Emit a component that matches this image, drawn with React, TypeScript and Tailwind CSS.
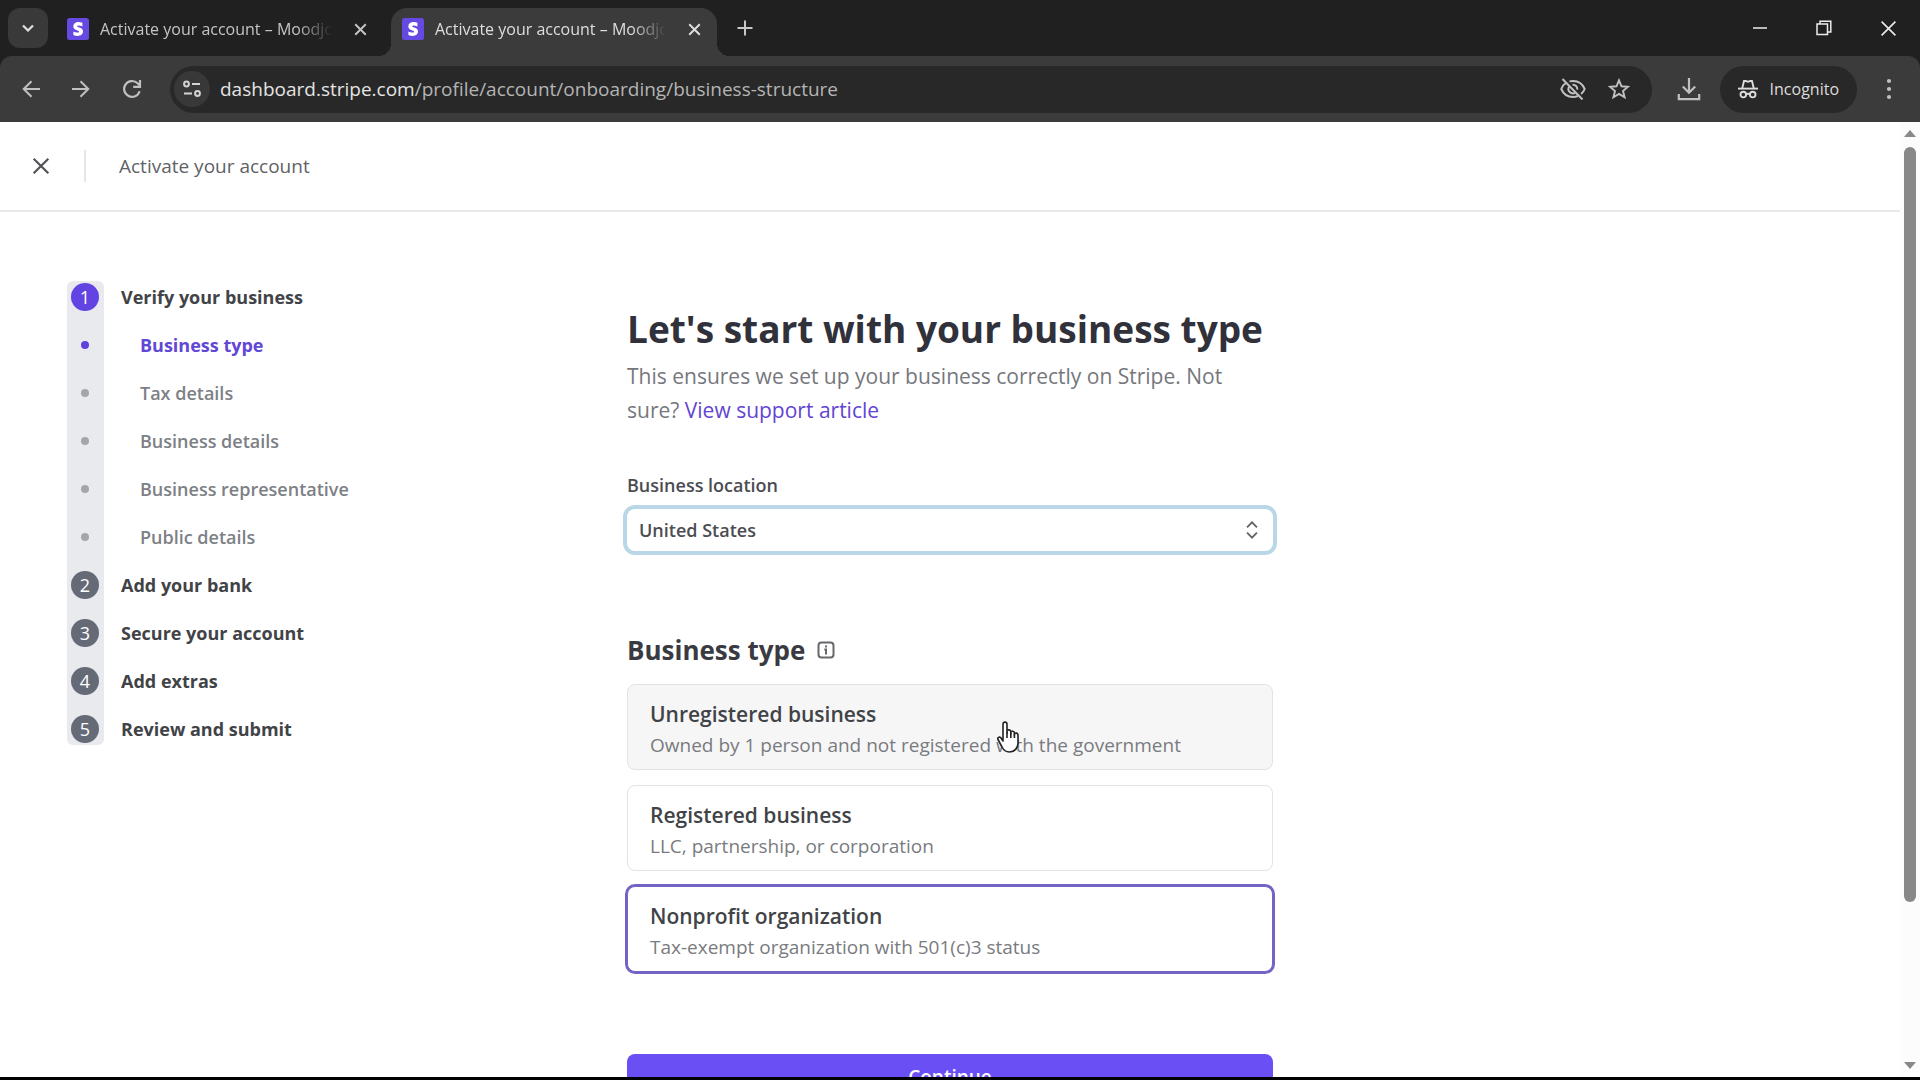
import React, { useState } from "react";

type Step = { label: string; number?: number; active?: boolean };

const steps: Step[] = [
  { label: "Verify your business", number: 1, active: true },
  { label: "Business type", active: true },
  { label: "Tax details" },
  { label: "Business details" },
  { label: "Business representative" },
  { label: "Public details" },
  { label: "Add your bank", number: 2 },
  { label: "Secure your account", number: 3 },
  { label: "Add extras", number: 4 },
  { label: "Review and submit", number: 5 },
];

const businessTypes = [
  {
    id: "unregistered",
    title: "Unregistered business",
    detail: "Owned by 1 person and not registered with the government",
    hovered: true,
  },
  {
    id: "registered",
    title: "Registered business",
    detail: "LLC, partnership, or corporation",
  },
  {
    id: "nonprofit",
    title: "Nonprofit organization",
    detail: "Tax-exempt organization with 501(c)3 status",
  },
];

function Cross({ className, width = 2 }: { className: string; width?: number }) {
  return (
    <svg viewBox="0 0 16 16" className={className} fill="none" stroke="currentColor" strokeWidth={width}>
      <path d="M1.5 1.5l13 13M14.5 1.5l-13 13" />
    </svg>
  );
}

function StripeIcon() {
  return (
    <svg viewBox="0 0 24 24" className="size-6 shrink-0" aria-hidden="true">
      <rect x="1" y="1" width="22" height="22" rx="2.5" fill="#6549e0" />
      <path
        d="M11.2 9.3c0-.6.5-.9 1.3-.9 1.2 0 2.7.4 3.9 1V5.7A10 10 0 0 0 12.500 5C9.400 5 7.300 6.700 7.300 9.400c0 4.200 5.800 3.500 5.800 5.300 0 .7-.6.9-1.500.9-1.300 0-2.900-.5-4.200-1.200v3.700c1.400.6 2.800.9 4.200.9 3.200 0 5.400-1.600 5.400-4.400 0-4.500-5.800-3.700-5.800-5.300z"
        fill="#fff"
      />
    </svg>
  );
}

function TabTitle({ active }: { active?: boolean }) {
  return (
    <span
      className={`min-w-0 flex-1 overflow-hidden whitespace-nowrap [mask-image:linear-gradient(to_right,black_85%,transparent)] ${
        active ? "text-[#dedede]" : "text-[#c4c4c4]"
      }`}
    >
      Activate your account – Moodjoy
    </span>
  );
}

function TabStrip() {
  return (
    <div className="flex h-14 shrink-0 items-stretch bg-[#202020] pl-2 text-[16px]">
      <button
        aria-label="Search tabs"
        className="mt-2 flex size-10 shrink-0 items-center justify-center rounded-xl bg-[#393939] text-[#e0e0e0]"
      >
        <svg viewBox="0 0 12 8" className="w-3" fill="none" stroke="currentColor" strokeWidth="2.200">
          <path d="M1 1.500l5 5 5-5" />
        </svg>
      </button>
      <div className="mt-2 ml-[18px] flex h-10 w-[325px] min-w-0 items-center gap-2.5 pr-6 pt-0.5">
        <StripeIcon />
        <TabTitle />
        <button aria-label="Close tab" className="ml-3 text-[#c4c4c4]">
          <Cross className="size-[13px]" width={2.4} />
        </button>
      </div>
      <div className="relative mt-2 flex w-[326px] min-w-0 items-center gap-2.5 rounded-t-2xl bg-[#3b3b3b] pr-4 pb-1.5 pl-[10px]">
        <span className="absolute bottom-0 -left-3 size-3 bg-[radial-gradient(circle_at_0_0,#202020_12px,#3b3b3b_12px)]" />
        <span className="absolute -right-3 bottom-0 size-3 bg-[radial-gradient(circle_at_100%_0,#202020_12px,#3b3b3b_12px)]" />
        <StripeIcon />
        <TabTitle active />
        <button aria-label="Close tab" className="ml-3 text-[#dedede]">
          <Cross className="size-[13px]" width={2.4} />
        </button>
      </div>
      <button aria-label="New tab" className="ml-5 text-[#c8c8c8]">
        <svg viewBox="0 0 16 16" className="size-4" fill="none" stroke="currentColor" strokeWidth="2">
          <path d="M8 .5v15M.5 8h15" />
        </svg>
      </button>
      <div className="ml-auto flex text-[#ececec]">
        <button aria-label="Minimize" className="flex w-16 items-center justify-center">
          <svg viewBox="0 0 14 14" className="w-3.5" stroke="currentColor" strokeWidth="1.500">
            <path d="M0 7h14" />
          </svg>
        </button>
        <button aria-label="Restore" className="flex w-16 items-center justify-center">
          <svg viewBox="0 0 16 16" className="w-4" fill="none" stroke="currentColor" strokeWidth="1.500">
            <path d="M1 4h10.500v10.500H1zM4 4V1.200h10.800V12h-3" />
          </svg>
        </button>
        <button aria-label="Close window" className="flex w-16 items-center justify-center">
          <Cross className="size-[17px]" width={1.5} />
        </button>
      </div>
    </div>
  );
}

function Toolbar() {
  return (
    <div className="bg-[#202020]">
      <div className="flex h-[66px] items-center rounded-t-xl bg-[#3b3b3b] pl-[22px] text-[#c0c0c0]">
        <button aria-label="Back" className="mr-8">
          <svg viewBox="0 0 18 18" className="size-[18px]" fill="none" stroke="currentColor" strokeWidth="2">
            <path d="M18 9H2M9.500 1.200L1.700 9l7.800 7.800" />
          </svg>
        </button>
        <button aria-label="Forward" className="mr-8">
          <svg viewBox="0 0 18 18" className="size-[18px]" fill="none" stroke="currentColor" strokeWidth="2">
            <path d="M0 9h16M8.500 1.200L16.300 9l-7.800 7.800" />
          </svg>
        </button>
        <button aria-label="Reload" className="mr-7">
          <svg viewBox="0 0 20 20" className="size-5" fill="none" stroke="currentColor" strokeWidth="2.200">
            <path d="M17.600 12.200A7.900 7.900 0 1 1 15.600 4.300L18 6.800" />
            <path d="M18 1v6.800h-6.800" />
          </svg>
        </button>
        <div className="flex h-[47px] min-w-0 flex-1 items-center rounded-full bg-[#282828] pr-[22px] pl-1">
          <button
            aria-label="View site information"
            className="flex size-9 shrink-0 items-center justify-center rounded-full bg-[#383838] text-[#d4d4d4]"
          >
            <svg viewBox="0 0 18 18" className="size-[18px]" fill="none" stroke="currentColor" strokeWidth="2">
              <circle cx="3.500" cy="4" r="2.400" />
              <path d="M9 4h8M1 13.500h8" />
              <circle cx="14.500" cy="13.500" r="2.400" />
            </svg>
          </button>
          <div className="ml-2.5 min-w-0 flex-1 truncate text-[19px] text-[#b4b4b4]">
            <span className="text-[#e4e4e4]">dashboard.stripe.com</span>/profile/account/onboarding/business-structure
          </div>
          <button aria-label="Third-party cookies blocked" className="mr-[22px]">
            <svg viewBox="0 0 26 22" className="h-[22px] w-[26px]" fill="none" stroke="currentColor" strokeWidth="2">
              <path d="M6.500 4.500C4 6 2.300 8.200 1.300 11c2 4.800 6.300 8 11.700 8 1.800 0 3.500-.4 5-1M9.500 3.400C10.600 3.100 11.800 3 13 3c5.400 0 9.700 3.200 11.700 8-.8 2-2 3.700-3.600 5" />
              <path d="M9.300 8.500a4.300 4.300 0 0 0 6 6M12.500 6.700a4.400 4.400 0 0 1 4.800 5" />
              <path d="M2.500 1l20 20.500" />
            </svg>
          </button>
          <button aria-label="Bookmark this page">
            <svg viewBox="0 0 22 22" className="size-[22px]" fill="none" stroke="currentColor" strokeWidth="1.900">
              <path d="M11 2.300l2.500 6 6.500.5-5 4.200 1.600 6.300L11 15.900l-5.600 3.400L7 13 2 8.800l6.500-.5z" />
            </svg>
          </button>
        </div>
        <button aria-label="Downloads" className="ml-[25px]">
          <svg viewBox="0 0 24 24" className="size-6" fill="none" stroke="currentColor" strokeWidth="2.200">
            <path d="M12 1v14.500M5.800 9.500L12 15.700l6.200-6.200M1.800 17v5.200h20.400V17" />
          </svg>
        </button>
        <button className="ml-[19px] flex h-[47px] items-center gap-3 rounded-full bg-[#282828] px-[18px] text-[16px] text-[#dcdcdc]">
          <svg viewBox="0 0 20 20" className="size-5" aria-hidden="true" fill="none" stroke="currentColor" strokeWidth="1.900">
            <path d="M4.300 9L6 2h2l2 .8L12 2h2l1.700 7" />
            <path d="M0 9.600h20" />
            <circle cx="5.300" cy="15.600" r="2.800" />
            <circle cx="14.700" cy="15.600" r="2.800" />
            <path d="M8 15.300q2-1 4 0" />
          </svg>
          Incognito
        </button>
        <button aria-label="Menu" className="mr-[21px] ml-[22px]">
          <svg viewBox="0 0 20 22" className="h-[22px] w-5" fill="currentColor">
            <circle cx="10" cy="3" r="2.100" />
            <circle cx="10" cy="11" r="2.100" />
            <circle cx="10" cy="19" r="2.100" />
          </svg>
        </button>
      </div>
    </div>
  );
}

function Stepper() {
  return (
    <nav aria-label="Onboarding steps" className="relative ml-[67px] self-start">
      <span className="absolute inset-y-2 left-0 w-[37px] rounded-md bg-[#e9eaee]" />
      <ol className="relative text-[18px]">
        {steps.map((step) => (
          <li key={step.label} className="flex h-12 items-center">
            <span className="flex w-9 shrink-0 justify-center">
              {step.number ? (
                <span
                  className={`flex size-7 items-center justify-center rounded-full text-white ${
                    step.active ? "bg-[#6244e2]" : "bg-[#656a77]"
                  }`}
                >
                  {step.number}
                </span>
              ) : (
                <span className={`size-2 rounded-full ${step.active ? "bg-[#5f41e0]" : "bg-[#a3a5aa]"}`} />
              )}
            </span>
            {step.number ? (
              <span className="ml-[18px] font-bold text-[#414347]">{step.label}</span>
            ) : (
              <a
                href="#"
                className={`ml-[37px] ${
                  step.active ? "font-bold text-[#6047d6]" : "font-semibold text-[#7d8085]"
                }`}
              >
                {step.label}
              </a>
            )}
          </li>
        ))}
      </ol>
    </nav>
  );
}

function PointerHand() {
  return (
    <svg
      viewBox="0 0 24 32"
      className="pointer-events-none absolute top-9 left-[368px] h-8 w-6"
      fill="#fff"
      stroke="#222"
      strokeWidth="1.600"
      strokeLinejoin="round"
      aria-hidden="true"
    >
      <path d="M7 20V3.200C7 .4 11 .4 11 3.200V12v-2c.5-1.600 3.600-1.500 3.800.6V13v-1.800c.6-1.400 3.400-1.300 3.600.7V14v-1.200c.6-1.200 3.400-1 3.600 1V22c0 5-3.500 9-8.500 9-4 0-6-2-7.500-5l-4-7.500c-.9-1.900 1.300-3.300 2.800-1.700z" />
      <path d="M11 11v6M14.800 12v5M18.400 13v4" />
    </svg>
  );
}

function BusinessForm() {
  const [selected, setSelected] = useState("nonprofit");
  return (
    <form className="pt-[91px] text-[#414347]" onSubmit={(e) => e.preventDefault()}>
      <h1 className="text-[37px] leading-[52px] font-bold whitespace-nowrap text-[#30313a]">
        Let's start with your business type
      </h1>
      <p className="mt-1 text-[21px] leading-[34px] text-[#75777c]">
        This ensures we set up your business correctly on Stripe. Not sure?{" "}
        <a href="#" className="text-[#6244d2]">
          View support article
        </a>
      </p>
      <label htmlFor="location" className="mt-[46px] block text-[18px] leading-6 font-semibold text-[#4b4d52]">
        Business location
      </label>
      <div className="relative mt-3">
        <select
          id="location"
          defaultValue="us"
          className="h-[42px] w-full appearance-none rounded-lg bg-white px-3 text-[18px] font-semibold text-[#4b4d52] ring-4 ring-[#b9d7e6] outline-none"
        >
          <option value="us">United States</option>
        </select>
        <svg
          viewBox="0 0 14 20"
          className="pointer-events-none absolute top-3 right-3.5 h-[18px] w-3.5"
          fill="none"
          stroke="#606266"
          strokeWidth="2"
          aria-hidden="true"
        >
          <path d="M1.500 7L7 1.500 12.500 7M1.500 13L7 18.500 12.500 13" />
        </svg>
      </div>
      <fieldset className="mt-20">
        <legend className="flex items-center gap-3 text-[26px] leading-[38px] font-bold text-[#3a3b42]">
          Business type
          <svg viewBox="0 0 18 18" className="size-[18px]" fill="none" stroke="#66686c" strokeWidth="2" aria-hidden="true">
            <rect x="1.500" y="1.500" width="15" height="15" rx="3" />
            <path d="M9 4.500v2M7.300 8.500H9v5" />
          </svg>
        </legend>
        <div className="mt-[15px] flex flex-col gap-[15px]">
          {businessTypes.map((type) => (
            <label
              key={type.id}
              className={`relative block h-[86px] rounded-lg border px-[22px] pt-[13px] ${
                selected === type.id ? "border-[#7462c4] ring-2 ring-[#7462c4]" : "border-[#e2e3e5]"
              } ${type.hovered ? "bg-[#f6f6f7]" : "bg-white"}`}
            >
              <input
                type="radio"
                name="business-type"
                className="sr-only"
                checked={selected === type.id}
                onChange={() => setSelected(type.id)}
              />
              <span className="block text-[21px] leading-8 font-semibold">{type.title}</span>
              <span className="block text-[19px] leading-[30px] text-[#797b80]">{type.detail}</span>
              {type.hovered && <PointerHand />}
            </label>
          ))}
        </div>
      </fieldset>
      <button
        type="submit"
        className="mt-[82px] h-[46px] w-full rounded-lg bg-[#6a4ff5] text-[19px] font-semibold text-white"
      >
        Continue
      </button>
    </form>
  );
}

function Scrollbar() {
  return (
    <div className="flex w-5 shrink-0 flex-col items-center bg-[#fcfcfc] py-2" aria-hidden="true">
      <span className="size-0 border-x-[6px] border-b-[7px] border-x-transparent border-b-[#888]" />
      <span className="mt-[10px] w-3 grow-[753] rounded-full bg-[#888]" />
      <span className="grow-[160]" />
      <span className="size-0 border-x-[6px] border-t-[7px] border-x-transparent border-t-[#888]" />
    </div>
  );
}

export default function App() {
  return (
    <div className="flex h-screen flex-col overflow-hidden border-b-[3px] border-black bg-white font-['Open_Sans',sans-serif]">
      <TabStrip />
      <Toolbar />
      <div className="flex min-h-0 flex-1">
        <main className="min-w-0 flex-1 overflow-hidden">
          <header className="flex h-[90px] items-center border-b-2 border-[#e9e9e9]">
            <button aria-label="Close" className="ml-8 text-[#505256]">
              <Cross className="size-[18px]" width={1.9} />
            </button>
            <span className="ml-[34px] h-8 w-0.5 bg-[#e6e6e6]" />
            <span className="ml-[33px] text-[19px] text-[#606266]">Activate your account</span>
          </header>
          <div className="grid grid-cols-[1fr_646px_1fr]">
            <div className="pt-[61px]">
              <Stepper />
            </div>
            <BusinessForm />
          </div>
        </main>
        <Scrollbar />
      </div>
    </div>
  );
}
